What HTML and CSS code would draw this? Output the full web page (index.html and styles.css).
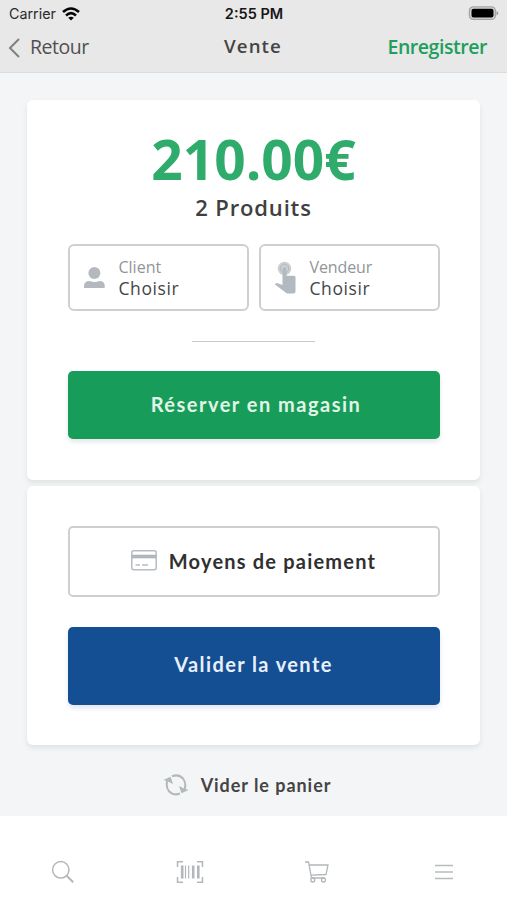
FILE: index.html
```html
<!DOCTYPE html>
<html lang="fr">
<head>
<meta charset="utf-8">
<meta name="viewport" content="width=device-width, initial-scale=1">
<title>Vente</title>
<link rel="stylesheet" href="styles.css">
</head>
<body>
<header class="header">
  <div class="status">
    <div class="carrier"><span class="carrier-name">Carrier</span>
      <svg width="18" height="14" viewBox="0 0 18 14" fill="none" stroke="#050505" stroke-width="2.6"><path d="M1 5Q9-2 17 5M4 8.400Q9 4 14 8.400"/><path d="M6.200 10.800Q9 8.500 11.800 10.800L9 13.500Z" fill="#050505" stroke="none"/></svg>
    </div>
    <span class="time">2:55 PM</span>
    <svg class="battery" width="31" height="15" viewBox="0 0 31 15"><rect x="1.400" y=".9" width="26" height="12.500" rx="4" fill="#d4d4d4" stroke="#a4a4a4" stroke-width="1.300"/><rect x="3.500" y="2.800" width="22" height="8.800" rx="2" fill="#000"/><path d="M28.500 4.800Q32 7.200 28.500 9.600Z" fill="#999"/></svg>
  </div>
  <nav class="nav">
    <a class="back"><svg width="12" height="20" viewBox="0 0 12 20" fill="none" stroke="#808080" stroke-width="2"><path d="M11 1 2 10l9 9"/></svg><span class="back-label">Retour</span></a>
    <h1 class="title">Vente</h1>
    <a class="save"><span>Enregistrer</span></a>
  </nav>
</header>
<main class="main">
  <section class="card summary">
    <div class="total"><span>210.00€</span></div>
    <div class="count"><span>2 Produits</span></div>
    <div class="pickers">
      <button class="picker">
        <svg width="22" height="34" viewBox="0 0 22 34" fill="#b3b9be"><circle cx="10.400" cy="12" r="6"/><path d="M0 27v-1.700Q0 20 5.600 20q4.800 2.200 9.600 0 5.600 0 5.600 5.300V26q0 1-1 1Z"/></svg>
        <span class="picker-text"><span class="label">Client</span><span class="value">Choisir</span></span>
      </button>
      <button class="picker">
        <svg width="22" height="34" viewBox="0 0 22 34"><circle cx="9.500" cy="7.500" r="6.800" fill="#cbd0d0"/><circle cx="9.500" cy="7.500" r="4.300" fill="none" stroke="#b2b9bb"/><path d="M7.500 8q0-1.800 2-1.800t2 1.800v6.800h7.500q1.500 0 1.500 1.500V30.500q0 2-2 2h-6.500L0 23.500q0-1.500 2-1.500L7.500 24Z" fill="#b3b9c0"/></svg>
        <span class="picker-text"><span class="label vendor">Vendeur</span><span class="value">Choisir</span></span>
      </button>
    </div>
    <div class="divider"></div>
    <button class="btn reserve"><span>Réserver en magasin</span></button>
  </section>
  <section class="card checkout">
    <button class="btn payment">
      <svg width="26" height="21" viewBox="0 0 26 21" fill="none"><rect x=".8" y=".8" width="24.400" height="19" rx="2" stroke="#b7bcc1" stroke-width="1.500"/><path d="M1 6.500h24" stroke="#b0b6bf" stroke-width="3.600"/><path d="M4.500 15h4.500M11 15h6" stroke="#b8bdc1" stroke-width="1.300"/></svg>
      <span>Moyens de paiement</span>
    </button>
    <button class="btn validate"><span>Valider la vente</span></button>
  </section>
  <button class="clear">
    <svg width="24" height="22" viewBox="0 0 24 22" fill="none" stroke="#b3b9bb" stroke-width="2"><path d="M8 2.300Q14.500-.3 19 4.500 22.500 9 20.700 15M16 19.500Q9.500 22 5 17.300 1.500 12.800 3.300 7"/><path d="M-.5 6 6.500 2.800 9 10 4 7.500ZM24.500 16 17.500 19.200 15 12 20 14.500Z" fill="#b3b9bb" stroke="none"/></svg>
    <span>Vider le panier</span>
  </button>
</main>
<footer class="tabs">
  <a class="tab"><svg width="24" height="24" viewBox="0 0 24 24" fill="none" stroke="#b3b7b9" stroke-width="1.500"><circle cx="9.800" cy="9.800" r="8.200"/><path d="m15.700 15.700 6.500 6.500" stroke-width="2"/></svg></a>
  <a class="tab"><svg width="28" height="24" viewBox="0 0 28 24" fill="none" stroke="#b3b7b9" stroke-width="1.500"><path d="M7 1.800H1.500V7M21 1.800h5.500V7M7 22.200H1.500V17M21 22.200h5.500V17"/><path d="M6.200 5.500v13M17.200 5.500v13M22.300 5.500v13" stroke-width="2.600"/><path d="M9.500 5.500v13M12.700 5.500v13" stroke-width="1.200"/></svg></a>
  <a class="tab"><svg width="26" height="24" viewBox="0 0 26 24" fill="none" stroke="#b3b7b9" stroke-width="1.300"><path d="M1 2h3.500L7.500 18H20.500M5.200 5H24l-2 9.500L7 15.200"/><circle cx="8.800" cy="20" r="2"/><circle cx="19.500" cy="20" r="2"/></svg></a>
  <a class="tab"><svg width="20" height="18" viewBox="0 0 20 18" stroke="#b8bbbd" stroke-width="1.700"><path d="M1 2.500h18M1 9h18M1 15.500h18"/></svg></a>
</footer>
</body>
</html>
```

FILE: styles.css
```css
* { box-sizing: border-box; }
body { margin: 0; width: 507px; height: 900px; display: flex; flex-direction: column; background: #fff; color: #3a3a3a; font-family: "Open Sans", sans-serif; overflow: hidden; }
button { margin: 0; padding: 0; border: 0; background: none; font: inherit; color: inherit; }
h1 { margin: 0; }
svg { display: block; flex: none; }
.header { height: 73px; background: #e8e8e8; border-bottom: 1px solid #dcdcdc; }
.status { display: grid; grid-template-columns: 1fr auto 1fr; align-items: center; height: 27px; padding: 0 8px 0 9px; font-family: Inter, sans-serif; }
.carrier { display: flex; align-items: center; gap: 6px; font-size: 14.3px; color: #2a2a2a; }
.time { font-size: 14.5px; font-weight: 600; color: #161616; }
.battery { justify-self: end; }
.nav { display: grid; grid-template-columns: 1fr auto 1fr; align-items: center; height: 40px; padding: 0 20px 0 8px; }
.back { display: flex; align-items: center; gap: 10px; font-size: 19.5px; letter-spacing: -.5px; color: #505050; }
.back svg { margin-top: 2px; }
.title { font-size: 18.7px; line-height: 36px; margin-top: -2px; font-weight: 600; letter-spacing: 1.1px; padding-left: 11px; color: #444; }
.save { justify-self: end; font-size: 19.5px; font-weight: 600; letter-spacing: -.45px; margin-top: -1px; color: #209e5d; }
.back-label { margin-top: -1px; }
.main { height: 743px; padding: 27px 27px 0; background: #f4f5f7; display: flex; flex-direction: column; align-items: center; }
.card { width: 453px; padding: 0 41px; border-radius: 6px; background: #fff; box-shadow: 0 3px 5px #dfe3e3; display: flex; flex-direction: column; align-items: center; }
.summary { height: 380px; padding-top: 29px; }
.checkout { height: 259px; margin-top: 6px; padding-top: 40px; }
.total { font-size: 55px; line-height: 60px; font-weight: 700; color: #2fac6b; }
.count { margin-top: 2px; font-size: 22px; line-height: 32px; font-weight: 600; letter-spacing: .85px; color: #404040; }
.pickers { display: grid; grid-template-columns: 1fr 1fr; gap: 10px; width: 372px; margin-top: 21px; }
.picker { height: 67px; padding-left: 14px; display: flex; align-items: center; gap: 13px; text-align: left; border: 2px solid #cdd0d2; border-radius: 6px; }
.picker-text { display: flex; flex-direction: column; line-height: 21px; }
.label { font-size: 16px; color: #929597; }
.vendor { letter-spacing: -.1px; }
.value { font-size: 17.5px; color: #454545; letter-spacing: .6px; }
.divider { width: 123px; height: 1px; margin: 30px 0 29px; background: #c9c9c9; }
.btn { width: 372px; border-radius: 5px; display: flex; align-items: center; justify-content: center; font-family: Lato, sans-serif; font-size: 20px; font-weight: 700; letter-spacing: 1.2px; padding-bottom: 2px; }
.reserve { height: 68px; padding: 0 0 2px 5px; background: #189c59; color: #e0f5e7; box-shadow: 0 3px 5px #e3e8e8; letter-spacing: 1.5px; }
.payment { height: 71px; gap: 12px; border: 2px solid #cdd0d2; color: #303030; }
.payment svg { margin-top: -1px; }
.validate { height: 78px; margin-top: 29.5px; padding-bottom: 3px; background: #144e93; color: #e8f0fa; box-shadow: 0 3px 5px #e0e6f2; letter-spacing: 1.4px; }
.clear { display: flex; align-items: center; gap: 13px; margin-top: 28px; height: 24px; margin-right: 12px; font-family: Lato, sans-serif; font-size: 18px; font-weight: 700; letter-spacing: .95px; color: #444; }
.tabs { height: 84px; display: grid; grid-template-columns: repeat(4, 1fr); align-items: center; padding: 28px 0 0; }
.tab { display: flex; justify-content: center; }
```
